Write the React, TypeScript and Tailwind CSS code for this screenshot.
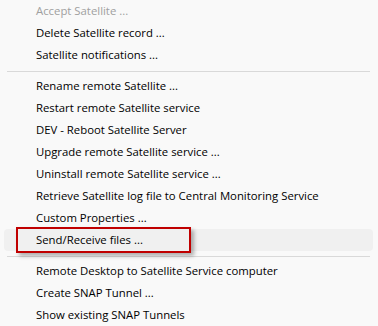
import React from "react";

type Item = { label: string; disabled?: boolean; highlight?: boolean } | "sep";

const items: Item[] = [
  { label: "Accept Satellite ...", disabled: true },
  { label: "Delete Satellite record ..." },
  { label: "Satellite notifications ..." },
  "sep",
  { label: "Rename remote Satellite ..." },
  { label: "Restart remote Satellite service" },
  { label: "DEV - Reboot Satellite Server" },
  { label: "Upgrade remote Satellite service ..." },
  { label: "Uninstall remote Satellite service ..." },
  { label: "Retrieve Satellite log file to Central Monitoring Service" },
  { label: "Custom Properties ..." },
  { label: "Send/Receive files ...", highlight: true },
  "sep",
  { label: "Remote Desktop to Satellite Service computer" },
  { label: "Create SNAP Tunnel ..." },
  { label: "Show existing SNAP Tunnels" },
];

export default function App() {
  return (
    <div
      className="w-[378px] h-[326px] bg-[#f9f9f9] overflow-hidden flex flex-col text-[11.35px] text-black"
      style={{ fontFamily: '"Open Sans", "DejaVu Sans", sans-serif' }}
    >
      {items.map((it, i) =>
        it === "sep" ? (
          <div key={i} className="h-[9px] px-[7px] pt-[5px] shrink-0">
            <div className="h-px w-[363px] bg-[#d9d9d9]" />
          </div>
        ) : (
          <div key={i} className="h-[22px] shrink-0 px-[4px] relative">
            <div
              className={`h-[22px] w-[369px] rounded-[4px] flex items-center pl-[32px] leading-[22px] ${
                it.highlight ? "bg-[#f0f0f0]" : ""
              } ${it.disabled ? "text-[#a0a0a0]" : "text-black"}`}
            >
              {it.label}
            </div>
            {it.highlight && (
              <div className="absolute left-[16px] top-[-2px] w-[175px] h-[26px] border-2 border-[#c00000] shadow-[3px_3px_4px_rgba(0,0,0,0.3)]" />
            )}
          </div>
        )
      )}
    </div>
  );
}
